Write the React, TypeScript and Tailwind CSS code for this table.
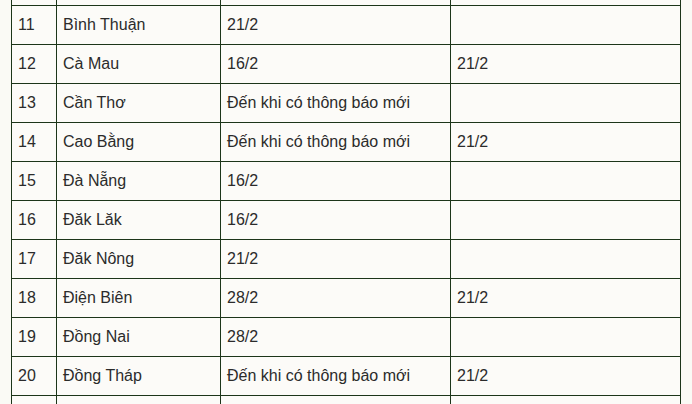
const rows: [string, string, string, string][] = [
  ["", "", "", ""],
  ["11", "Bình Thuận", "21/2", ""],
  ["12", "Cà Mau", "16/2", "21/2"],
  ["13", "Cần Thơ", "Đến khi có thông báo mới", ""],
  ["14", "Cao Bằng", "Đến khi có thông báo mới", "21/2"],
  ["15", "Đà Nẵng", "16/2", ""],
  ["16", "Đăk Lăk", "16/2", ""],
  ["17", "Đăk Nông", "21/2", ""],
  ["18", "Điện Biên", "28/2", "21/2"],
  ["19", "Đồng Nai", "28/2", ""],
  ["20", "Đồng Tháp", "Đến khi có thông báo mới", "21/2"],
  ["", "", "", ""],
]

export default function App() {
  return (
    <div className="w-[692px] h-[404px] overflow-hidden bg-[#fafaf5] font-['Liberation_Sans',Arial,sans-serif] text-[16px] text-[#2b2b2b]">
      <div className="pl-[11px] mt-[-34px]">
        <table className="table-fixed border-collapse w-[670px] bg-[#fcfbf8]">
          <colgroup>
            <col className="w-[45px]" />
            <col className="w-[164px]" />
            <col className="w-[230px]" />
            <col className="w-[230px]" />
          </colgroup>
          <tbody>
            {rows.map((r, i) => (
              <tr key={i}>
                {r.map((c, j) => (
                  <td
                    key={j}
                    className="border border-[#1c3519] px-[6px] py-[10px] leading-[18px] h-[39px] align-middle whitespace-nowrap"
                  >
                    {c}
                  </td>
                ))}
              </tr>
            ))}
          </tbody>
        </table>
      </div>
    </div>
  )
}
